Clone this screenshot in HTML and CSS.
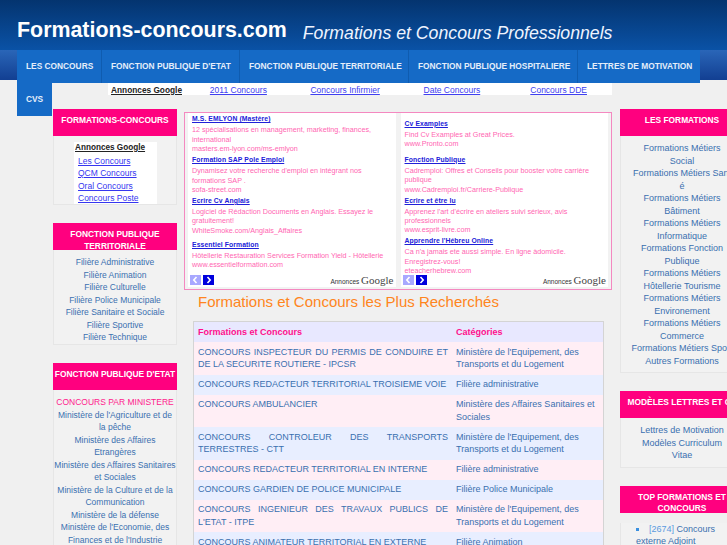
FILE: index.html
```html
<!DOCTYPE html>
<html lang="fr">
<head>
<meta charset="utf-8">
<title>Formations-concours.com</title>
<link rel="stylesheet" href="styles.css">
</head>
<body>
<header class="masthead">
  <div class="site-name">Formations-concours.com</div>
  <div class="tagline">Formations et Concours Professionnels</div>
</header>
<div class="navband">
  <nav class="nav">
    <a>LES CONCOURS</a>
    <a>FONCTION PUBLIQUE D'ETAT</a>
    <a>FONCTION PUBLIQUE TERRITORIALE</a>
    <a>FONCTION PUBLIQUE HOSPITALIERE</a>
    <a>LETTRES DE MOTIVATION</a>
    <a>CVS</a>
  </nav>
</div>
<div class="linkbar">
  <b>Annonces Google</b>
  <a>2011 Concours</a>
  <a>Concours Infirmier</a>
  <a>Date Concours</a>
  <a>Concours DDE</a>
</div>
<div class="page">
  <aside class="col">
    <section class="panel">
      <h3>FORMATIONS-CONCOURS</h3>
      <div class="panel-body first">
        <div class="sidead">
          <b>Annonces Google</b>
          <a>Les Concours</a>
          <a>QCM Concours</a>
          <a>Oral Concours</a>
          <a>Concours Poste</a>
        </div>
      </div>
    </section>
    <section class="panel">
      <h3 class="tight">FONCTION PUBLIQUE TERRITORIALE</h3>
      <div class="panel-body links short">
        <a>Filière Administrative</a>
        <a>Filière Animation</a>
        <a>Filière Culturelle</a>
        <a>Filière Police Municipale</a>
        <a>Filière Sanitaire et Sociale</a>
        <a>Filière Sportive</a>
        <a>Filière Technique</a>
      </div>
    </section>
    <section class="panel">
      <h3>FONCTION PUBLIQUE D'ETAT</h3>
      <div class="panel-body links">
        <span class="hot">CONCOURS PAR MINISTERE</span>
        <a>Ministère de l'Agriculture et de la pêche</a>
        <a>Ministère des Affaires Etrangères</a>
        <a>Ministère des Affaires Sanitaires et Sociales</a>
        <a>Ministère de la Culture et de la Communication</a>
        <a>Ministère de la défense</a>
        <a>Ministère de l'Economie, des Finances et de l'Industrie</a>
      </div>
    </section>
  </aside>

  <main class="center">
    <div class="adbox">
      <div class="adcol">
        <div class="ad"><a>M.S. EMLYON (Mastère)</a><p>12 spécialisations en management, marketing, finances, international<br>masters.em-lyon.com/ms-emlyon</p></div>
        <div class="ad"><a>Formation SAP Pole Emploi</a><p>Dynamisez votre recherche d'emploi en intégrant nos formations SAP .<br>sofa-street.com</p></div>
        <div class="ad"><a>Ecrire Cv Anglais</a><p>Logiciel de Rédaction Documents en Anglais. Essayez le gratuitement!<br>WhiteSmoke.com/Anglais_Affaires</p></div>
        <div class="ad gap"><a>Essentiel Formation</a><p>Hôtellerie Restauration Services Formation Yield - Hôtellerie<br>www.essentielformation.com</p></div>
        <div class="adfoot">
          <svg class="arrow" viewBox="0 0 11 10"><rect width="11" height="10" fill="#a8a8ff"/><path d="M6.5 2 3.8 5l2.7 3" fill="none" stroke="#fff" stroke-width="1.6"/></svg>
          <svg class="arrow" viewBox="0 0 11 10"><rect width="11" height="10" fill="#0000dd"/><path d="M4.5 2 7.2 5 4.5 8" fill="none" stroke="#fff" stroke-width="1.6"/></svg>
          <span class="adsby">Annonces <em>Google</em></span>
        </div>
      </div>
      <div class="adcol">
        <div class="ad gap"><a>Cv Examples</a><p>Find Cv Examples at Great Prices.<br>www.Pronto.com</p></div>
        <div class="ad wide"><a>Fonction Publique</a><p>Cadremploi: Offres et Conseils pour booster votre carrière publique<br>www.Cadremploi.fr/Carriere-Publique</p></div>
        <div class="ad"><a>Ecrire et être lu</a><p>Apprenez l'art d'écrire en ateliers suivi sérieux, avis professionnels<br>www.esprit-livre.com</p></div>
        <div class="ad"><a>Apprendre l'Hébreu Online</a><p>Ca n'a jamais ete aussi simple. En ligne àdomicile. Enregistrez-vous!<br>eteacherhebrew.com</p></div>
        <div class="adfoot">
          <svg class="arrow" viewBox="0 0 11 10"><rect width="11" height="10" fill="#a8a8ff"/><path d="M6.5 2 3.8 5l2.7 3" fill="none" stroke="#fff" stroke-width="1.6"/></svg>
          <svg class="arrow" viewBox="0 0 11 10"><rect width="11" height="10" fill="#0000dd"/><path d="M4.5 2 7.2 5 4.5 8" fill="none" stroke="#fff" stroke-width="1.6"/></svg>
          <span class="adsby">Annonces <em>Google</em></span>
        </div>
      </div>
    </div>
    <h2>Formations et Concours les Plus Recherchés</h2>
    <table class="top">
      <thead>
        <tr><th>Formations et Concours</th><th>Catégories</th></tr>
      </thead>
      <tbody>
        <tr class="rose"><td>CONCOURS INSPECTEUR DU PERMIS DE CONDUIRE ET DE LA SECURITE ROUTIERE - IPCSR</td><td>Ministère de l'Equipement, des Transports et du Logement</td></tr>
        <tr class="blue"><td>CONCOURS REDACTEUR TERRITORIAL TROISIEME VOIE</td><td>Filière administrative</td></tr>
        <tr class="rose"><td>CONCOURS AMBULANCIER</td><td>Ministère des Affaires Sanitaires et Sociales</td></tr>
        <tr class="blue"><td>CONCOURS CONTROLEUR DES TRANSPORTS TERRESTRES - CTT</td><td>Ministère de l'Equipement, des Transports et du Logement</td></tr>
        <tr class="rose"><td>CONCOURS REDACTEUR TERRITORIAL EN INTERNE</td><td>Filière administrative</td></tr>
        <tr class="blue"><td>CONCOURS GARDIEN DE POLICE MUNICIPALE</td><td>Filière Police Municipale</td></tr>
        <tr class="rose"><td>CONCOURS INGENIEUR DES TRAVAUX PUBLICS DE L'ETAT - ITPE</td><td>Ministère de l'Equipement, des Transports et du Logement</td></tr>
        <tr class="blue"><td>CONCOURS ANIMATEUR TERRITORIAL EN EXTERNE</td><td>Filière Animation</td></tr>
      </tbody>
    </table>
  </main>

  <aside class="col right">
    <section class="panel">
      <h3>LES FORMATIONS</h3>
      <div class="panel-body links">
        <a>Formations Métiers Social</a>
        <a>Formations Métiers Sant<br>é</a>
        <a>Formations Métiers Bâtiment</a>
        <a>Formations Métiers Informatique</a>
        <a>Formations Fonction Publique</a>
        <a>Formations Métiers Hôtellerie Tourisme</a>
        <a>Formations Métiers Environement</a>
        <a>Formations Métiers Commerce</a>
        <a>Formations Métiers Sport</a>
        <a>Autres Formations</a>
      </div>
    </section>
    <section class="panel">
      <h3 class="nowrap">MODÈLES LETTRES ET CV</h3>
      <div class="panel-body links">
        <a>Lettres de Motivation</a>
        <a>Modèles Curriculum<br>Vitae</a>
      </div>
    </section>
    <section class="panel">
      <h3 class="tight">TOP FORMATIONS ET CONCOURS</h3>
      <div class="panel-body">
        <ul class="toplist">
          <li><span class="count">[2674]</span> Concours externe Adjoint</li>
        </ul>
      </div>
    </section>
  </aside>
</div>
</body>
</html>
```
FILE: styles.css
```css
html, body {
  margin: 0;
  padding: 0;
  height: 545px;
  overflow: hidden;
}
body {
  background: #f0f0f0;
  font-family: "Liberation Sans", Arial, sans-serif;
  font-size: 8.5px;
  color: #3a70b0;
}
.masthead {
  height: 50px;
  box-sizing: border-box;
  padding: 17px 0 0 17px;
  display: flex;
  align-items: baseline;
  gap: 16px;
  background: linear-gradient(#04346f, #0a52a6);
  color: #fff;
}
.site-name {
  font-size: 21.4px;
  font-weight: bold;
  line-height: 26px;
}
.tagline {
  font-size: 17.7px;
  font-style: italic;
  color: #eef4ff;
  position: relative;
  top: 2px;
}
.navband {
  height: 33px;
  padding-left: 17px;
  background: linear-gradient(#2a66b8 0, #123f92 30px, #f0f0f0 30px);
}
.nav {
  display: flex;
  flex-wrap: wrap;
  width: 683px;
  position: relative;
  z-index: 2;
}
.nav a {
  height: 33px;
  line-height: 32px;
  padding: 0 9px;
  box-sizing: border-box;
  background: #156ac6;
  color: #e4eefa;
  font-weight: bold;
  font-size: 8.35px;
  white-space: nowrap;
  border-right: 1px solid #0f5cb0;
}
.nav a:nth-child(1) { width: 85px; }
.nav a:nth-child(2) { width: 138px; }
.nav a:nth-child(3) { width: 169px; }
.nav a:nth-child(4) { width: 169px; }
.nav a:nth-child(5) { width: 122px; border-right: 0; }
.nav a:nth-child(6) { width: 35px; border-right: 0; }
.linkbar {
  margin-left: 108px;
  width: 504px;
  height: 12px;
  display: grid;
  grid-template-columns: 77px repeat(4, 1fr);
  background: #fff;
  line-height: 14px;
  text-align: center;
}
.linkbar b {
  color: #222;
  font-size: 8.3px;
  text-decoration: underline;
}
.linkbar a {
  color: #4040f0;
  text-decoration: underline;
}
.page {
  margin: 14px 0 0 53px;
  display: grid;
  grid-template-columns: 124px 428px 125px;
  column-gap: 7px;
  align-items: start;
}
.col.right { margin-left: 1px; }
.panel {
  margin-bottom: 18px;
}
.panel h3 {
  margin: 0;
  height: 27px;
  box-sizing: border-box;
  background: #ff007f;
  color: #fff;
  text-align: center;
  font-size: 8.4px;
  line-height: 23px;
  overflow: visible;
}
.panel h3.tight {
  line-height: 11.5px;
  padding: 6px 8px 0;
}
.panel h3.nowrap { white-space: nowrap; }
.panel-body {
  background: #f2f2f2;
  border: 1px solid #e6e6e6;
  border-top: 0;
  text-align: center;
}
.panel-body.first {
  height: 69px;
  padding: 6px 0 0;
  box-sizing: border-box;
  overflow: hidden;
}
.sidead {
  width: 83px;
  margin-left: 20px;
  height: 63px;
  background: #fff;
  text-align: left;
  line-height: 12.5px;
}
.sidead b {
  display: block;
  padding-left: 1px;
  color: #222;
  font-size: 8.2px;
  text-decoration: underline;
}
.sidead a {
  display: block;
  padding-left: 4px;
  color: #3636f0;
  text-decoration: underline;
}
.links {
  padding: 6px 0 5px;
  line-height: 12.5px;
}
.links.short { padding-bottom: .5px; }
.right .links {
  padding-left: 9px;
  padding-right: 9px;
  font-size: 9px;
}
.links a, .links .hot {
  display: block;
}
.hot { color: #ff1a8c; }
.adbox {
  margin-top: 3px;
  height: 178px;
  box-sizing: border-box;
  border: 1px solid #f488c0;
  padding: 0 3px 2px;
  display: flex;
  gap: 5px;
  background: #f2f2f2;
}
.adcol {
  width: 208px;
  position: relative;
  background: #fff;
  padding: 1.3px 6px 0 4px;
  box-sizing: border-box;
  font-size: 7.2px;
  line-height: 9.4px;
  color: #ff66b2;
}
.ad { margin-bottom: 1.6px; }
.ad.gap { margin-top: 4.6px; }
.ad.wide { margin-top: 6px; }
.ad > a {
  color: #2020d8;
  font-size: 6.8px;
  font-weight: bold;
  text-decoration: underline;
  letter-spacing: .1px;
}
.ad p {
  margin: 1.6px 0 0;
}
.adfoot {
  position: absolute;
  left: 2px;
  right: 2px;
  bottom: 1px;
  display: flex;
  align-items: center;
  gap: 2px;
}
.arrow {
  width: 11px;
  height: 10px;
}
.adsby {
  margin-left: auto;
  font-size: 6.5px;
  color: #333;
}
.adsby em {
  font: 11px "Liberation Serif", serif;
  color: #444;
}
h2 {
  margin: 2px 0 0 14px;
  height: 29px;
  font-size: 15px;
  line-height: 19px;
  font-weight: normal;
  color: #ff8520;
}
.top {
  width: 411px;
  margin-left: 9px;
  border-collapse: collapse;
  border: 1px solid #d4d4d4;
  table-layout: fixed;
  font-size: 9px;
  line-height: 12.5px;
}
.top th, .top td {
  padding: 3.75px 4px;
  vertical-align: top;
  text-align: left;
}
.top th:first-child { width: 250px; }
.top th {
  background: #e8e8ff;
  color: #ff0f8c;
  font-weight: bold;
}
.top td:first-child { text-align: justify; }
.rose td { background: #ffeef5; }
.blue td { background: #e8eeff; }
.toplist {
  margin: 10px 0 0;
  padding: 0 12px 0 15px;
  text-align: left;
  list-style: square inside;
  font-size: 9px;
  line-height: 12.5px;
}
.toplist li::marker { color: #3a90e0; }
.count { color: #5a9ae0; }
```
